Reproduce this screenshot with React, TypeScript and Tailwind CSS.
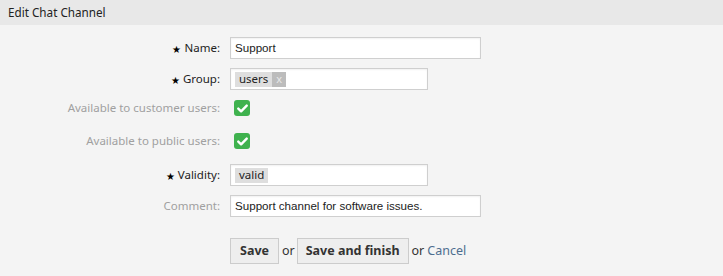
const labelFont = { fontFamily: '"Noto Sans", "Open Sans", sans-serif' };

const Star = () => <span className="mr-[3px] align-[-1px] text-[10px] text-black">★</span>;

const Label = ({ text, required }: { text: string; required?: boolean }) => (
  <div
    className={`w-[230px] shrink-0 pr-[10px] text-right text-[11.5px] ${required ? 'text-[#222]' : 'text-[#a0a0a0]'}`}
    style={labelFont}
  >
    {required && <Star />}
    {text}:
  </div>
);

const Check = () => (
  <span className="ml-[4px] flex h-[16px] w-[16px] items-center justify-center rounded-[3px] bg-[#3fb24e]">
    <svg width="11" height="9" viewBox="0 0 11 9" fill="none">
      <path d="M1.3 4.6 4.1 7.3 9.7 1.6" stroke="white" strokeWidth="2.4" strokeLinecap="round" strokeLinejoin="round" />
    </svg>
  </span>
);

const inputCls =
  'flex h-[22px] items-center border border-[#cfcfcf] bg-white px-[4px] text-[11.6px] text-[#222] shadow-[inset_0_1px_2px_rgba(0,0,0,0.06)]';
const inputFont = { fontFamily: '"Liberation Sans", Arial, sans-serif' };

const Tag = ({ text, removable }: { text: string; removable?: boolean }) => (
  <span className="flex h-[15px] items-stretch bg-[#dedede] text-[11.5px] text-[#222]" style={labelFont}>
    <span className="flex items-center px-[4px]">{text}</span>
    {removable && <span className="flex items-center bg-[#bcbcbc] px-[4px] text-[11px] text-[#e8e8e8]">x</span>}
  </span>
);

const App = () => {
  return (
    <div className="h-[276px] w-[723px] bg-[#f4f4f4]">
      <div className="flex h-[25px] items-center bg-[#e8e8e8] pl-[8px] text-[11.7px] text-[#222]" style={labelFont}>
        Edit Chat Channel
      </div>

      <div className="pt-[12px]">
        <div className="flex items-center">
          <Label text="Name" required />
          <div className={`${inputCls} w-[251px]`} style={inputFont}>
            Support
          </div>
        </div>

        <div className="mt-[9px] flex items-center">
          <Label text="Group" required />
          <div className={`${inputCls} w-[198px]`}>
            <Tag text="users" removable />
          </div>
        </div>

        <div className="mt-[10px] flex h-[16px] items-center">
          <Label text="Available to customer users" />
          <Check />
        </div>

        <div className="mt-[17px] flex h-[16px] items-center">
          <Label text="Available to public users" />
          <Check />
        </div>

        <div className="mt-[15px] flex items-center">
          <Label text="Validity" required />
          <div className={`${inputCls} w-[198px]`}>
            <Tag text="valid" />
          </div>
        </div>

        <div className="mt-[9px] flex items-center">
          <Label text="Comment" />
          <div className={`${inputCls} w-[251px]`} style={inputFont}>
            Support channel for software issues.
          </div>
        </div>

        <div className="mt-[21px] flex items-center text-[12.5px] text-[#333]" style={labelFont}>
          <div className="w-[230px] shrink-0" />
          <button className="h-[26px] border border-[#cccccc] bg-[#eeeeee] px-[9px] font-bold text-[#333]">Save</button>
          <span className="ml-[3px] mr-[2px]">or</span>
          <button className="h-[26px] border border-[#cccccc] bg-[#eeeeee] px-[8px] font-bold text-[#333]">
            Save and finish
          </button>
          <span className="ml-[3px]">or</span>
          <span className="ml-[3px] text-[#4d6d8f]">Cancel</span>
        </div>
      </div>
    </div>
  );
};

export default App;
